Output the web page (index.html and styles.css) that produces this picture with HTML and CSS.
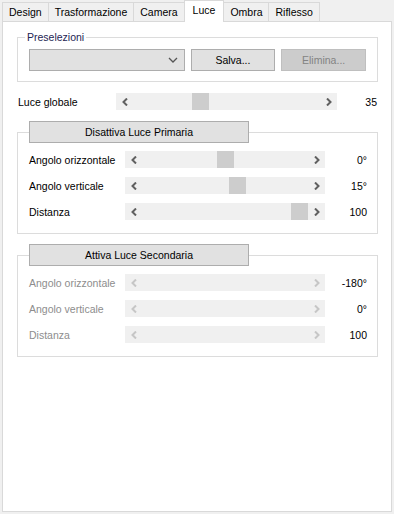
FILE: index.html
```html
<!DOCTYPE html>
<html lang="it">
<head>
    <meta charset="UTF-8">
    <title>Luce</title>
    <link rel="stylesheet" href="styles.css">
</head>
<body>
    <div class="tabs">
        <div class="tab">Design</div>
        <div class="tab">Trasformazione</div>
        <div class="tab">Camera</div>
        <div class="tab active">Luce</div>
        <div class="tab">Ombra</div>
        <div class="tab last">Riflesso</div>
    </div>
    <div class="page">
        <fieldset class="group presets">
            <legend>Preselezioni</legend>
            <div class="preset-row">
                <div class="combo">
                    <svg width="10" height="6" viewBox="0 0 10 6"><polyline points="1,1 5,5 9,1" fill="none" stroke="#555" stroke-width="1.3"/></svg>
                </div>
                <button class="btn">Salva...</button>
                <button class="btn" disabled>Elimina...</button>
            </div>
        </fieldset>

        <div class="row global">
            <span class="label">Luce globale</span>
            <div class="scroll">
                <span class="arrow"><svg width="6" height="8" viewBox="0 0 6 8"><polyline points="5,0.5 1.5,4 5,7.5" fill="none" stroke="currentColor" stroke-width="2"/></svg></span>
                <div class="track"><div class="thumb" style="margin-left: calc((100% - 17px) * 0.35)"></div></div>
                <span class="arrow"><svg width="6" height="8" viewBox="0 0 6 8"><polyline points="1,0.5 4.5,4 1,7.5" fill="none" stroke="currentColor" stroke-width="2"/></svg></span>
            </div>
            <span class="value">35</span>
        </div>

        <fieldset class="group light">
            <legend><button class="btn wide">Disattiva Luce Primaria</button></legend>
            <div class="row">
                <span class="label">Angolo orizzontale</span>
                <div class="scroll">
                    <span class="arrow"><svg width="6" height="8" viewBox="0 0 6 8"><polyline points="5,0.5 1.5,4 5,7.5" fill="none" stroke="currentColor" stroke-width="2"/></svg></span>
                    <div class="track"><div class="thumb" style="margin-left: calc((100% - 17px) * 0.5)"></div></div>
                    <span class="arrow"><svg width="6" height="8" viewBox="0 0 6 8"><polyline points="1,0.5 4.5,4 1,7.5" fill="none" stroke="currentColor" stroke-width="2"/></svg></span>
                </div>
                <span class="value">0°</span>
            </div>
            <div class="row">
                <span class="label">Angolo verticale</span>
                <div class="scroll">
                    <span class="arrow"><svg width="6" height="8" viewBox="0 0 6 8"><polyline points="5,0.5 1.5,4 5,7.5" fill="none" stroke="currentColor" stroke-width="2"/></svg></span>
                    <div class="track"><div class="thumb" style="margin-left: calc((100% - 17px) * 0.583)"></div></div>
                    <span class="arrow"><svg width="6" height="8" viewBox="0 0 6 8"><polyline points="1,0.5 4.5,4 1,7.5" fill="none" stroke="currentColor" stroke-width="2"/></svg></span>
                </div>
                <span class="value">15°</span>
            </div>
            <div class="row">
                <span class="label">Distanza</span>
                <div class="scroll">
                    <span class="arrow"><svg width="6" height="8" viewBox="0 0 6 8"><polyline points="5,0.5 1.5,4 5,7.5" fill="none" stroke="currentColor" stroke-width="2"/></svg></span>
                    <div class="track"><div class="thumb" style="margin-left: calc((100% - 17px) * 1)"></div></div>
                    <span class="arrow"><svg width="6" height="8" viewBox="0 0 6 8"><polyline points="1,0.5 4.5,4 1,7.5" fill="none" stroke="currentColor" stroke-width="2"/></svg></span>
                </div>
                <span class="value">100</span>
            </div>
        </fieldset>

        <fieldset class="group light off">
            <legend><button class="btn wide">Attiva Luce Secondaria</button></legend>
            <div class="row">
                <span class="label">Angolo orizzontale</span>
                <div class="scroll">
                    <span class="arrow"><svg width="6" height="8" viewBox="0 0 6 8"><polyline points="5,0.5 1.5,4 5,7.5" fill="none" stroke="currentColor" stroke-width="2"/></svg></span>
                    <div class="track"></div>
                    <span class="arrow"><svg width="6" height="8" viewBox="0 0 6 8"><polyline points="1,0.5 4.5,4 1,7.5" fill="none" stroke="currentColor" stroke-width="2"/></svg></span>
                </div>
                <span class="value">-180°</span>
            </div>
            <div class="row">
                <span class="label">Angolo verticale</span>
                <div class="scroll">
                    <span class="arrow"><svg width="6" height="8" viewBox="0 0 6 8"><polyline points="5,0.5 1.5,4 5,7.5" fill="none" stroke="currentColor" stroke-width="2"/></svg></span>
                    <div class="track"></div>
                    <span class="arrow"><svg width="6" height="8" viewBox="0 0 6 8"><polyline points="1,0.5 4.5,4 1,7.5" fill="none" stroke="currentColor" stroke-width="2"/></svg></span>
                </div>
                <span class="value">0°</span>
            </div>
            <div class="row">
                <span class="label">Distanza</span>
                <div class="scroll">
                    <span class="arrow"><svg width="6" height="8" viewBox="0 0 6 8"><polyline points="5,0.5 1.5,4 5,7.5" fill="none" stroke="currentColor" stroke-width="2"/></svg></span>
                    <div class="track"></div>
                    <span class="arrow"><svg width="6" height="8" viewBox="0 0 6 8"><polyline points="1,0.5 4.5,4 1,7.5" fill="none" stroke="currentColor" stroke-width="2"/></svg></span>
                </div>
                <span class="value">100</span>
            </div>
        </fieldset>
    </div>
</body>
</html>
```

FILE: styles.css
```css
body {
    margin: 0;
    padding: 0 2px;
    background-color: #f0f0f0;
    font-family: "Liberation Sans", Arial, sans-serif;
    font-size: 10.5px;
    color: #000;
}
.tabs {
    display: flex;
    align-items: flex-end;
    height: 21px;
}
.tab {
    height: 18px;
    line-height: 18px;
    padding: 0 6px;
    border: 1px solid #d9d9d9;
    border-bottom: none;
    border-right: none;
    background-color: #f0f0f0;
}
.tab.last {
    border-right: 1px solid #d9d9d9;
}
.tab.active {
    position: relative;
    z-index: 1;
    height: 21px;
    line-height: 19px;
    margin-bottom: -1px;
    padding: 0 8px;
    background-color: #fff;
    border-right: 1px solid #d9d9d9;
}
.tab.active + .tab {
    border-left: none;
}
.page {
    height: 489px;
    background-color: #fff;
    border: 1px solid #d9d9d9;
}
.group {
    margin: 8px 13px 0 14px;
    padding: 0 10px 13px 11px;
    border: 1px solid #dcdcdc;
    min-width: 0;
}
.group legend {
    padding: 0;
}
.presets {
    padding: 5px 11px 10px 7px;
}
.presets legend {
    padding: 0 2px;
    line-height: 14px;
    color: #1e2554;
}
.preset-row {
    display: flex;
    gap: 6px;
    padding-left: 4px;
}
.combo {
    box-sizing: border-box;
    width: 156px;
    height: 22px;
    border: 1px solid #adadad;
    background-color: #e1e1e1;
    display: flex;
    align-items: center;
    justify-content: flex-end;
    padding-right: 6px;
}
.btn {
    width: 85px;
    height: 22px;
    padding: 0;
    border: 1px solid #adadad;
    background-color: #e1e1e1;
    font: inherit;
    color: #000;
}
.btn[disabled] {
    border-color: #bfbfbf;
    background-color: #cccccc;
    color: #838383;
}
.btn.wide {
    width: 220px;
}
.light {
    margin-top: 11px;
    padding-top: 8px;
}
.light.off {
    margin-top: 10px;
}
.row {
    display: flex;
    align-items: center;
    height: 17px;
}
.row + .row {
    margin-top: 9px;
}
.label {
    width: 96px;
    flex-shrink: 0;
}
.value {
    flex: 1;
    text-align: right;
}
.global {
    margin: 11px 14px 0 15px;
}
.global .label {
    width: 98px;
}
.global .scroll {
    width: 221px;
}
.scroll {
    width: 200px;
    height: 17px;
    display: flex;
    background-color: #f0f0f0;
    color: #606060;
    flex-shrink: 0;
}
.arrow {
    width: 17px;
    display: flex;
    align-items: center;
    justify-content: center;
}
.track {
    flex: 1;
    display: flex;
}
.thumb {
    width: 17px;
    background-color: #cdcdcd;
}
.off .label {
    color: #8d8d8d;
}
.off .scroll {
    color: #c6c6c6;
}
```
